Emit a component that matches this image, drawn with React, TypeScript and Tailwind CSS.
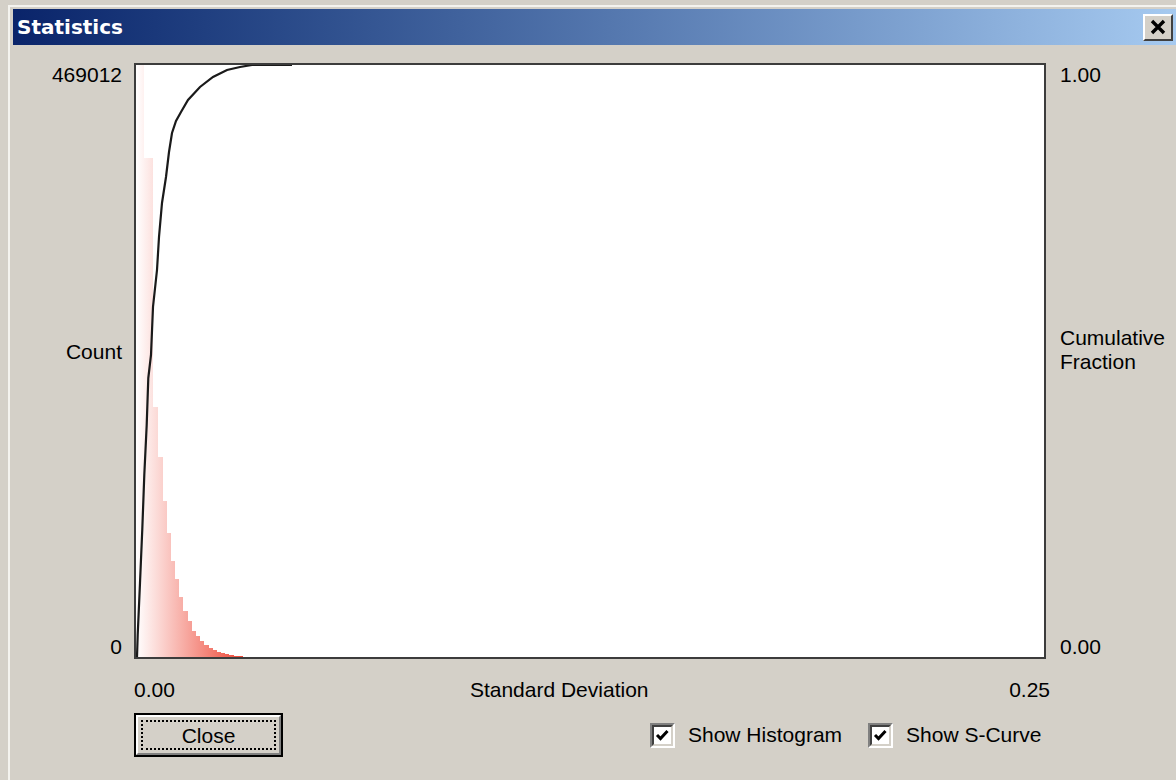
import React from "react";

// histogram bins as [left, right, top] in plot pixel space (inner area 136..1044 x 65..657)
const bins: [number, number, number][] = [
  [136, 143, 65],
  [143, 152, 158],
  [152, 157, 407],
  [157, 162, 457],
  [162, 166, 501],
  [166, 170, 533],
  [170, 174, 561],
  [174, 178, 579],
  [178, 182, 597],
  [182, 187, 611],
  [187, 191, 621],
  [191, 195, 631],
  [195, 199, 636],
  [199, 203, 641],
  [203, 208, 645],
  [208, 212, 648],
  [212, 216, 650],
  [216, 220, 652],
  [220, 224, 653],
  [224, 228, 654],
  [228, 233, 655],
  [233, 242, 656],
];

const sCurve = [
  [137, 657],
  [137.7, 635],
  [140, 583],
  [142.3, 529],
  [144.3, 475],
  [146.7, 425],
  [148.3, 378],
  [151, 355],
  [153, 307],
  [157, 270],
  [159, 237],
  [162, 203],
  [166, 177],
  [169, 152],
  [172, 133],
  [176, 121],
  [181, 112],
  [188, 100],
  [200, 87],
  [213, 77],
  [227, 70],
  [240, 67],
  [252, 65],
  [292, 65],
];

const ui = { fontFamily: '"Liberation Sans", Arial, sans-serif' };

const Plot: React.FC = () => (
  <div className="w-[912px] h-[596px] border-2 border-[#3c3c3c] bg-white">
    <svg viewBox="136 65 908 592" className="block w-full h-full">
      <defs>
        <linearGradient id="histFill" gradientUnits="userSpaceOnUse" x1="136" y1="0" x2="244" y2="0">
          <stop offset="0" stopColor="#ffffff" />
          <stop offset="1" stopColor="#ee4433" />
        </linearGradient>
      </defs>
      <g shapeRendering="crispEdges">
        {bins.map(([x0, x1, top]) => (
          <rect key={x0} x={x0} y={top} width={x1 - x0 + 0.5} height={657 - top} fill="url(#histFill)" />
        ))}
      </g>
      <polyline
        points={sCurve.map((p) => p.join(",")).join(" ")}
        fill="none"
        stroke="#1a1a1a"
        strokeWidth={2.2}
      />
    </svg>
  </div>
);

const CheckBox: React.FC<{ label: string }> = ({ label }) => (
  <div className="flex items-center">
    <div className="w-[25px] h-[25px] border-2 border-t-[#808080] border-l-[#808080] border-b-white border-r-white">
      <div className="w-full h-full border-2 border-t-[#404040] border-l-[#404040] border-b-[#d4d0c8] border-r-[#d4d0c8] bg-white">
        <svg viewBox="0 0 17 17" className="block w-full h-full">
          <polyline points="3,8 6.5,11.5 13.5,4" fill="none" stroke="#000" strokeWidth={3} />
        </svg>
      </div>
    </div>
    <span className="ml-[13px] text-[21px] leading-[24px] text-black" style={ui}>
      {label}
    </span>
  </div>
);

export default function App() {
  return (
    <div className="w-[1176px] h-[780px] bg-[#d4d0c8] overflow-hidden" style={ui}>
      <div className="mt-[5px] ml-[8px] h-[775px] border-t-2 border-l-2 border-[#f4f3ef] pt-[2px]">
        {/* caption */}
        <div className="ml-[3px] h-[36px] flex items-center bg-gradient-to-r from-[#0a246a] to-[#a6caf0] pl-[4px] pr-[3px]">
          <span
            className="text-white font-bold text-[20px] leading-none"
            style={{ fontFamily: '"DejaVu Sans", Verdana, sans-serif' }}
          >
            Statistics
          </span>
          <div className="ml-auto w-[30px] h-[27px] bg-[#d4d0c8] border-2 border-t-white border-l-white border-b-[#404040] border-r-[#404040] flex items-center justify-center">
            <svg viewBox="0 0 16 16" className="w-[16px] h-[16px]">
              <path d="M2 2 L14 14 M14 2 L2 14" stroke="#000" strokeWidth={3.4} />
            </svg>
          </div>
        </div>

        {/* chart row */}
        <div className="flex mt-[18px] text-[21px] leading-[24px] text-black">
          <div className="w-[112px] h-[596px] flex flex-col items-end">
            <span>469012</span>
            <span className="mt-[253px]">Count</span>
            <span className="mt-auto">0</span>
          </div>
          <div className="ml-[12px]">
            <Plot />
          </div>
          <div className="ml-[14px] h-[596px] flex flex-col">
            <span>1.00</span>
            <span className="mt-[239px]">
              Cumulative
              <br />
              Fraction
            </span>
            <span className="mt-auto">0.00</span>
          </div>
        </div>

        {/* x axis */}
        <div className="ml-[124px] w-[916px] mt-[19px] flex text-[21px] leading-[24px] text-black">
          <span>0.00</span>
          <span className="ml-[295px]">Standard Deviation</span>
          <span className="ml-auto">0.25</span>
        </div>

        {/* buttons */}
        <div className="ml-[124px] mt-[11px] flex items-center">
          <div className="w-[149px] h-[44px] border-2 border-black">
            <div className="w-full h-full border-2 border-t-white border-l-white border-b-[#808080] border-r-[#808080] p-[3px]">
              <div className="w-full h-full border-2 border-dotted border-black flex items-center justify-center text-[21px] leading-none">
                Close
              </div>
            </div>
          </div>
          <div className="ml-[367px] flex items-center">
            <CheckBox label="Show Histogram" />
            <div className="ml-[26px]">
              <CheckBox label="Show S-Curve" />
            </div>
          </div>
        </div>
      </div>
    </div>
  );
}
